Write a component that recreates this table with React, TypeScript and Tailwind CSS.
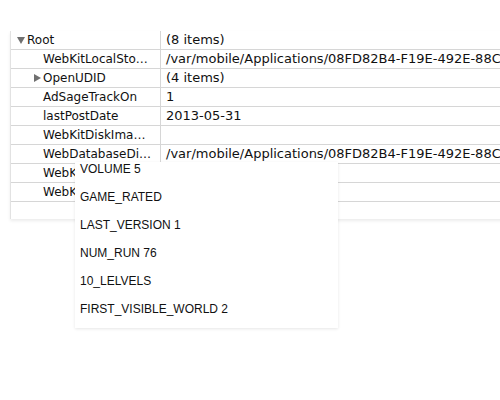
import React from 'react';

type Row = { key: string; value?: string; depth: number; toggle?: 'open' | 'closed' };

const rows: Row[] = [
  { key: 'Root', value: '(8 items)', depth: 0, toggle: 'open' },
  { key: 'WebKitLocalSto…', value: '/var/mobile/Applications/08FD82B4-F19E-492E-88C0-1A2B3C4D5E6F', depth: 1 },
  { key: 'OpenUDID', value: '(4 items)', depth: 1, toggle: 'closed' },
  { key: 'AdSageTrackOn', value: '1', depth: 1 },
  { key: 'lastPostDate', value: '2013-05-31', depth: 1 },
  { key: 'WebKitDiskIma…', value: '', depth: 1 },
  { key: 'WebDatabaseDi…', value: '/var/mobile/Applications/08FD82B4-F19E-492E-88C0-1A2B3C4D5E6F', depth: 1 },
  { key: 'WebKitOfflineW…', value: '', depth: 1 },
  { key: 'WebKitShrinks…', value: '', depth: 1 },
];

const popupItems = ['VOLUME 5', 'GAME_RATED', 'LAST_VERSION 1', 'NUM_RUN 76', '10_LELVELS', 'FIRST_VISIBLE_WORLD 2'];

function Toggle({ kind }: { kind: 'open' | 'closed' }) {
  return (
    <svg width="8" height="8" viewBox="0 0 8 8" className="shrink-0">
      {kind === 'open' ? <path d="M0 1 L8 1 L4 8 Z" fill="#707070" /> : <path d="M1 0 L8 4 L1 8 Z" fill="#707070" />}
    </svg>
  );
}

export default function App() {
  return (
    <div className="relative w-[500px] h-[400px] overflow-hidden bg-white" style={{ fontFamily: '"DejaVu Sans", sans-serif' }}>
      <div className="pt-[31px] pl-[10px]">
        <div className="w-[560px] border-l border-[#e2e2e2] bg-white shadow-[0_2px_3px_rgba(0,0,0,0.08)]">
          {rows.map((r, i) => (
            <div key={i} className="flex h-[19px] border-b border-[#d6d6d6] leading-[18px] text-[#111]">
              <div className="flex w-[150px] shrink-0 items-center overflow-hidden whitespace-nowrap border-r border-[#d6d6d6] text-[12px]">
                {r.depth === 0 ? (
                  <div className="flex items-center pl-[6px]">
                    <Toggle kind="open" />
                    <span className="pl-[2px]">{r.key}</span>
                  </div>
                ) : (
                  <div className="flex items-center pl-[22px]">
                    <div className="flex w-[10px] justify-start">{r.toggle && <Toggle kind={r.toggle} />}</div>
                    <span>{r.key}</span>
                  </div>
                )}
              </div>
              <div className="overflow-hidden whitespace-nowrap pl-[5px] text-[13px]">{r.value}</div>
            </div>
          ))}
          <div className="h-[17px]" />
        </div>
      </div>

      <div
        className="absolute left-[75px] top-[162px] w-[263px] h-[166px] bg-white shadow-[0_1px_3px_rgba(0,0,0,0.1)] pl-[5px] text-[12px] text-[#111]"
        style={{ fontFamily: '"Liberation Sans", Arial, sans-serif' }}
      >
        <div className="flex flex-col gap-[14px] leading-[14px]">
          {popupItems.map((t) => (
            <div key={t}>{t}</div>
          ))}
        </div>
      </div>
    </div>
  );
}
